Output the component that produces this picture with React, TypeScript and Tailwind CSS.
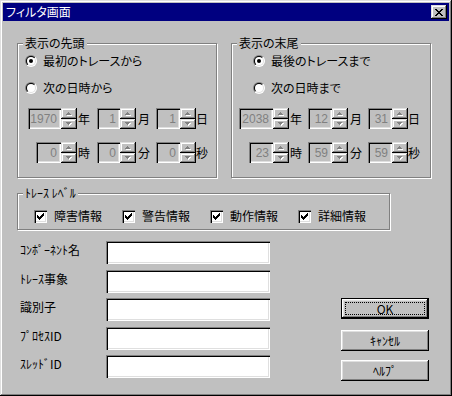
import React from 'react';

// Win95 style bevels
const sunken =
  'shadow-[inset_1px_1px_0_#808080,inset_2px_2px_0_#000,inset_-1px_-1px_0_#fff,inset_-2px_-2px_0_#dfdfdf]';
const raised =
  'shadow-[inset_-1px_-1px_0_#000,inset_1px_1px_0_#fff,inset_-2px_-2px_0_#808080,inset_2px_2px_0_#dfdfdf]';
const raisedWin =
  'shadow-[inset_-1px_-1px_0_#000,inset_1px_1px_0_#dfdfdf,inset_-2px_-2px_0_#808080,inset_2px_2px_0_#fff]';

function Group({ label, className, children }: { label: string; className: string; children: React.ReactNode }) {
  return (
    <div className={`relative border border-[#808080] shadow-[inset_1px_1px_0_#fff,1px_1px_0_#fff] ${className}`}>
      <span className="absolute -top-[8px] left-[5px] px-[2px] bg-[#c0c0c0] leading-[14px]">{label}</span>
      {children}
    </div>
  );
}

function Radio({ checked }: { checked?: boolean }) {
  return (
    <svg width="12" height="12" viewBox="0 0 12 12" className="shrink-0">
      <defs>
        <linearGradient id="rg-out" x1="0" y1="0" x2="1" y2="1">
          <stop offset="0.5" stopColor="#808080" />
          <stop offset="0.5" stopColor="#ffffff" />
        </linearGradient>
        <linearGradient id="rg-in" x1="0" y1="0" x2="1" y2="1">
          <stop offset="0.5" stopColor="#000000" />
          <stop offset="0.5" stopColor="#dfdfdf" />
        </linearGradient>
      </defs>
      <circle cx="6" cy="6" r="6" fill="url(#rg-out)" />
      <circle cx="6" cy="6" r="5" fill="url(#rg-in)" />
      <circle cx="6" cy="6" r="4" fill="#fff" />
      {checked && <circle cx="6" cy="6" r="2" fill="#000" />}
    </svg>
  );
}

function Check() {
  return (
    <div className={`w-[13px] h-[13px] shrink-0 bg-white flex items-center justify-center ${sunken}`}>
      <svg width="7" height="7" viewBox="0 0 7 7" shapeRendering="crispEdges">
        <path d="M6 0h1v1h-1zM5 1h2v1h-2zM0 2h1v1h-1zM4 2h3v1h-3zM0 3h2v1h-2zM3 3h3v1h-3zM0 4h5v1h-5zM1 5h3v1h-3zM2 6h1v1h-1z" fill="#000" />
      </svg>
    </div>
  );
}

function Arrow({ up }: { up?: boolean }) {
  const d = up ? 'M2 0h1v1h-1zM1 1h3v1h-3zM0 2h5v1h-5z' : 'M0 0h5v1h-5zM1 1h3v1h-3zM2 2h1v1h-1z';
  return (
    <svg width="6" height="4" viewBox="0 0 6 4" shapeRendering="crispEdges">
      <path d={d} fill="#fff" transform="translate(1,1)" />
      <path d={d} fill="#808080" />
    </svg>
  );
}

function Spin({ value, w }: { value: string; w: string }) {
  return (
    <div className="flex shrink-0">
      <div
        className={`${w} h-[21px] flex items-center justify-end pr-[4px] text-[#808080] font-['Liberation_Sans',sans-serif] ${sunken}`}
      >
        {value}
      </div>
      <div className="w-[16px] h-[21px] flex flex-col">
        <div className={`h-[11px] flex items-center justify-center ${raisedWin}`}>
          <Arrow up />
        </div>
        <div className={`h-[10px] flex items-center justify-center ${raisedWin}`}>
          <Arrow />
        </div>
      </div>
    </div>
  );
}

function Field({ label, className }: { label: string; className?: string }) {
  return (
    <div className={`flex items-center h-[23px] ${className ?? ''}`}>
      <span className="w-[86px] mb-[6px] whitespace-nowrap">{label}</span>
      <div className={`w-[164px] h-[23px] bg-white ${sunken}`} />
    </div>
  );
}

export default function App() {
  return (
    <div
      className={`w-[452px] h-[396px] bg-[#c0c0c0] p-[3px] flex flex-col text-black text-[12px] leading-[14px] font-['Noto_Sans_CJK_JP','Noto_Sans',sans-serif] [font-feature-settings:'palt'] ${raisedWin}`}
    >
      {/* title bar */}
      <div className="h-[18px] shrink-0 bg-[#000080] flex items-center pl-[3px] pr-[2px]">
        <span className="text-white">フィルタ画面</span>
        <div className={`ml-auto w-[16px] h-[14px] bg-[#c0c0c0] flex items-center justify-center ${raisedWin}`}>
          <svg width="8" height="7" viewBox="0 0 8 7" shapeRendering="crispEdges">
            <path
              d="M0 0h2v1h-2zM6 0h2v1h-2zM1 1h2v1h-2zM5 1h2v1h-2zM2 2h4v1h-4zM3 3h2v1h-2zM2 4h4v1h-4zM1 5h2v1h-2zM5 5h2v1h-2zM0 6h2v1h-2zM6 6h2v1h-2z"
              fill="#000"
            />
          </svg>
        </div>
      </div>

      <div className="flex flex-col pl-[14px]">
        <div className="flex gap-[14px] mt-[22px]">
          <Group label="表示の先頭" className="w-[200px] h-[135px] pt-[10px]">
            <div className="flex items-center h-[14px] pl-[7px]">
              <Radio checked />
              <span className="ml-[6px]">最初のトレースから</span>
            </div>
            <div className="flex items-center h-[14px] mt-[13px] pl-[7px]">
              <Radio />
              <span className="ml-[6px]">次の日時から</span>
            </div>
            <div className="flex items-center mt-[13px] pl-[10px]">
              <Spin value="1970" w="w-[33px]" />
              <span className="ml-[1px]">年</span>
              <div className="ml-[7px]"><Spin value="1" w="w-[23px]" /></div>
              <span className="ml-[2px]">月</span>
              <div className="ml-[6px]"><Spin value="1" w="w-[24px]" /></div>
              <span>日</span>
            </div>
            <div className="flex items-center mt-[13px] pl-[18px]">
              <Spin value="0" w="w-[25px]" />
              <span className="ml-[1px]">時</span>
              <div className="ml-[7px]"><Spin value="0" w="w-[23px]" /></div>
              <span className="ml-[2px]">分</span>
              <div className="ml-[6px]"><Spin value="0" w="w-[24px]" /></div>
              <span>秒</span>
            </div>
          </Group>

          <Group label="表示の末尾" className="w-[200px] h-[135px] pt-[10px]">
            <div className="flex items-center h-[14px] pl-[21px]">
              <Radio checked />
              <span className="ml-[6px]">最後のトレースまで</span>
            </div>
            <div className="flex items-center h-[14px] mt-[13px] pl-[21px]">
              <Radio />
              <span className="ml-[6px]">次の日時まで</span>
            </div>
            <div className="flex items-center mt-[13px] pl-[7px]">
              <Spin value="2038" w="w-[34px]" />
              <span className="ml-[1px]">年</span>
              <div className="ml-[6px]"><Spin value="12" w="w-[24px]" /></div>
              <span className="ml-[2px]">月</span>
              <div className="ml-[6px]"><Spin value="31" w="w-[24px]" /></div>
              <span>日</span>
            </div>
            <div className="flex items-center mt-[13px] pl-[17px]">
              <Spin value="23" w="w-[24px]" />
              <span className="ml-[1px]">時</span>
              <div className="ml-[6px]"><Spin value="59" w="w-[24px]" /></div>
              <span className="ml-[2px]">分</span>
              <div className="ml-[6px]"><Spin value="59" w="w-[24px]" /></div>
              <span>秒</span>
            </div>
          </Group>
        </div>

        <Group label="ﾄﾚｰｽ ﾚﾍﾞﾙ" className="w-[373px] h-[37px] mt-[15px] pl-[16px] pt-[15px]">
          <div className="flex h-[14px]">
            {['障害情報', '警告情報', '動作情報', '詳細情報'].map((t) => (
              <div key={t} className="w-[88px] flex items-center">
                <Check />
                <span className="ml-[7px]">{t}</span>
              </div>
            ))}
          </div>
        </Group>

        <div className="flex mt-[11px]">
          <div className="ml-[3px] flex flex-col">
            <Field label="ｺﾝﾎﾟｰﾈﾝﾄ名" />
            <Field label="ﾄﾚｰｽ事象" className="mt-[6px]" />
            <Field label="識別子" className="mt-[5px]" />
            <Field label="ﾌﾟﾛｾｽID" className="mt-[6px]" />
            <Field label="ｽﾚｯﾄﾞID" className="mt-[5px]" />
          </div>
          <div className="ml-[71px] mt-[57px] flex flex-col">
            <div className={`w-[88px] h-[21px] border border-black p-[3px] flex ${raised}`}>
              <div className="flex-1 border border-dotted border-black flex items-center justify-center">OK</div>
            </div>
            <div className={`w-[88px] h-[21px] mt-[11px] flex items-center justify-center ${raised}`}>ｷｬﾝｾﾙ</div>
            <div className={`w-[88px] h-[21px] mt-[9px] flex items-center justify-center ${raised}`}>ﾍﾙﾌﾟ</div>
          </div>
        </div>
      </div>
    </div>
  );
}
